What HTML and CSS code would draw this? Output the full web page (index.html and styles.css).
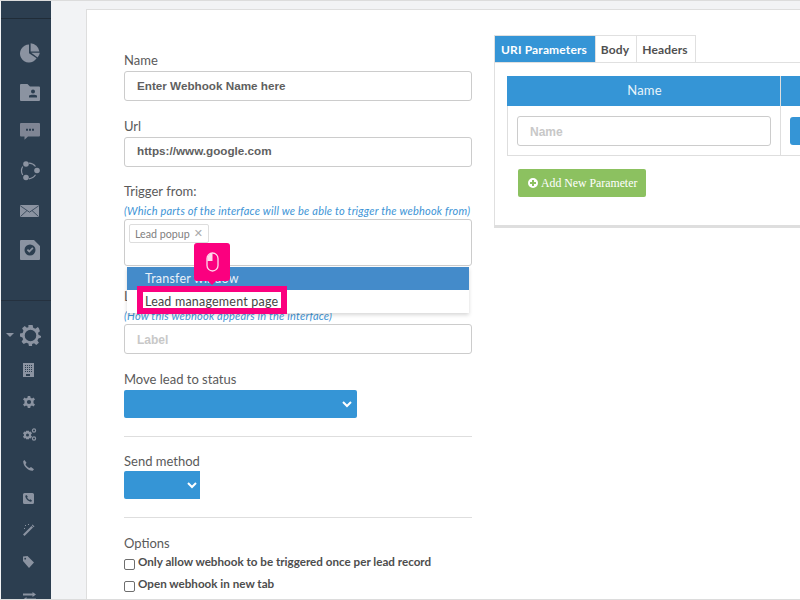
FILE: index.html
```html
<!DOCTYPE html>
<html lang="en">
<head>
<meta charset="utf-8">
<title>Webhook</title>
<link rel="stylesheet" href="styles.css">
</head>
<body>
<div class="app">
  <aside class="sidebar">
    <div class="side-top"></div>
    <nav class="side-main">
      <div class="big-row"><svg width="20" height="20" viewBox="0 0 20 20"><path d="M9 1.500A9 9 0 1 0 16.600 15.300L9 10.300Z"/><path d="M10.400 0.200A9.600 9.600 0 0 1 19.200 8.400L10.400 8.400Z" transform="translate(0.200 0)"/><path d="M11.200 9.800H19.800A9.600 9.600 0 0 1 17.600 14.600Z"/></svg></div>
      <div class="big-row"><svg width="20" height="17" viewBox="0 0 20 17"><path fill-rule="evenodd" d="M1 0H7.500L10 2.500H19A1 1 0 0 1 20 3.500V16A1 1 0 0 1 19 17H1A1 1 0 0 1 0 16V1A1 1 0 0 1 1 0ZM13 5.500A2 2 0 1 0 13 9.500A2 2 0 1 0 13 5.500ZM9 13.500H17V11.800C16 10.500 10 10.500 9 11.800Z"/></svg></div>
      <div class="big-row"><svg class="dim" width="20" height="17" viewBox="0 0 20 17"><path fill-rule="evenodd" d="M1 0H19A1 1 0 0 1 20 1V12.500A1 1 0 0 1 19 13.500H8L4.500 16.800V13.500H1A1 1 0 0 1 0 12.500V1A1 1 0 0 1 1 0ZM6 5.800H8V7.800H6ZM9 5.800H11V7.800H9ZM12 5.800H14V7.800H12Z"/></svg></div>
      <div class="big-row"><svg width="20" height="20" viewBox="0 0 20 20"><circle cx="6" cy="3" r="2.800"/><circle cx="17" cy="9.500" r="2.800"/><circle cx="6" cy="16.500" r="2.800"/><path class="line" d="M9 2.200A8.500 8.500 0 0 1 15.500 5.500M15.500 13.800A8.500 8.500 0 0 1 9 17.800M2.700 14A8.500 8.500 0 0 1 2.700 5.500"/></svg></div>
      <div class="big-row"><svg width="19" height="12" viewBox="0 0 19 12"><rect width="19" height="12" rx="0.500"/><path class="cut" d="M0.300 0.800L9.500 7.200L18.700 0.800M0.500 11.500L7 5.500M18.500 11.500L12 5.500"/></svg></div>
      <div class="big-row"><svg width="20" height="20" viewBox="0 0 20 20"><path fill-rule="evenodd" d="M1 0H14L20 6V19A1 1 0 0 1 19 20H1A1 1 0 0 1 0 19V1A1 1 0 0 1 1 0ZM10 4.500A5.500 5.500 0 1 0 10 15.500A5.500 5.500 0 1 0 10 4.500ZM6.800 10.200L8 9L9.300 10.300L12.300 7.300L13.500 8.500L9.300 12.700Z"/></svg></div>
    </nav>
    <div class="side-rule"></div>
    <nav class="side-settings">
      <div class="gear-row">
        <span class="caret"></span>
        <svg class="gear-main" width="21" height="21" viewBox="0 0 20 20"><path fill-rule="evenodd" d="M8 0H12L12.600 2.700L14.600 3.500L17 2L18 3L19 6L17.200 7.400L17.600 9.300L20 10.500V12L17.500 12.800L16.600 14.700L18 17L15.500 19L13.400 17.400L11.500 18V20H8.500L8 17.600L6 16.800L3.500 18L1.500 16L3 13.500L2.300 11.800L0 11V8L2.500 7.500L3.300 5.500L2 3L4.500 1L6.500 2.700L8 2.200ZM10 4.500A5.500 5.500 0 1 0 10 15.500A5.500 5.500 0 1 0 10 4.500Z"/></svg>
      </div>
      <div class="small-row r-building"><svg width="11" height="14" viewBox="0 0 11 14"><path fill-rule="evenodd" d="M0 0H11V14H0ZM2 2V3H3V2ZM4 2V3H5V2ZM6 2V3H7V2ZM8 2V3H9V2ZM2 4V5H3V4ZM4 4V5H5V4ZM6 4V5H7V4ZM8 4V5H9V4ZM2 6V7H3V6ZM4 6V7H5V6ZM6 6V7H7V6ZM8 6V7H9V6ZM2 8V9H3V8ZM4 8V9H5V8ZM6 8V9H7V8ZM8 8V9H9V8ZM3 11V13H7V11Z"/></svg></div>
      <div class="small-row"><svg width="12" height="12" viewBox="0 0 20 20"><path fill-rule="evenodd" d="M8 0H12L12.600 3L15 4L17.500 2.500L20 6L17.500 8L17.500 12L20 14L17.500 17.500L15 16L12.600 17L12 20H8L7.400 17L5 16L2.500 17.500L0 14L2.500 12V8L0 6L2.500 2.500L5 4L7.400 3ZM10 6.500A3.500 3.500 0 1 0 10 13.500A3.500 3.500 0 1 0 10 6.500Z"/></svg></div>
      <div class="small-row"><svg width="14" height="13" viewBox="0 0 14 13"><path fill-rule="evenodd" d="M3 2.800H6L6.300 4L7.800 3.500L9 5.500L8 6.500V7.500L9 8.500L7.800 10.500L6.300 10L6 11.200H3L2.700 10L1.200 10.500L0 8.500L1 7.500V6.500L0 5.500L1.200 3.500L2.700 4ZM4.500 5.500A1.500 1.500 0 1 0 4.500 8.500A1.500 1.500 0 1 0 4.500 5.500Z"/><circle class="line" cx="11" cy="2.500" r="1.600"/><circle class="line" cx="11" cy="10.500" r="1.600"/></svg></div>
      <div class="small-row"><svg class="up" width="11" height="11" viewBox="0 0 11 11"><path d="M1.500 0L3.500 2.800L2.500 4.200C3.200 5.800 4.800 7.500 6.500 8L8 7L11 9.300L9.800 10.800C5.500 11.500 -0.500 5.500 0.300 1Z"/></svg></div>
      <div class="small-row"><svg width="11" height="11" viewBox="0 0 11 11"><path fill-rule="evenodd" d="M1.500 0H9.500A1.500 1.500 0 0 1 11 1.500V9.500A1.500 1.500 0 0 1 9.500 11H1.500A1.500 1.500 0 0 1 0 9.500V1.500A1.500 1.500 0 0 1 1.500 0ZM3.500 2L2.300 2.800C2.200 5.500 5.500 9 8.200 8.700L9 7.500L7.200 6.300L6.400 7C5.500 6.600 4.400 5.400 4.100 4.600L4.800 3.800Z"/></svg></div>
      <div class="small-row"><svg width="12" height="12" viewBox="0 0 12 12"><path d="M0 10.500L8.500 2L10 3.500L1.500 12Z"/><path d="M9.500 0.500L11.500 2.500L10.500 3.200L8.800 1.300Z"/><rect x="2" y="1" width="1" height="1"/><rect x="5" y="0" width="1" height="1"/><rect x="1" y="4" width="1" height="1"/></svg></div>
      <div class="small-row"><svg width="11" height="12" viewBox="0 0 11 12"><path fill-rule="evenodd" d="M0 0.500L4.500 0L11 6.500L6 12L0 5ZM2.200 1.800A0.900 0.900 0 1 0 2.200 3.600A0.900 0.900 0 1 0 2.200 1.800Z"/></svg></div>
      <div class="small-row"><svg class="exchange" width="13" height="9" viewBox="0 0 13 9"><path d="M0 1.500H9.500V0L13 2.500L9.500 5V3.500H0Z"/><path d="M13 6.500H3.500V5L0 7.500L3.500 10V8.500H13Z"/></svg></div>
    </nav>
  </aside>

  <main class="workspace">
    <section class="card">
      <form class="form-col">
        <div class="field field-first">
          <label class="lbl">Name</label>
          <div class="input strong">Enter Webhook Name here</div>
        </div>
        <div class="field">
          <label class="lbl">Url</label>
          <div class="input strong url">https://www.google.com</div>
        </div>
        <div class="field field-trigger">
          <label class="lbl">Trigger from:</label>
          <div class="hint">(Which parts of the interface will we be able to trigger the webhook from)</div>
          <div class="multi">
            <span class="chip">Lead popup <span class="chip-x">&#10005;</span></span>
          </div>
          <div class="dropdown">
            <div class="opt opt-on">Transfer window</div>
            <div class="opt">Lead management page</div>
          </div>
          <div class="mouse-tip">
            <svg width="13" height="20" viewBox="0 0 13 20"><rect x="1" y="1" width="11" height="18" rx="5.500" fill="none" stroke="#fff" stroke-width="1.300" opacity="0.85"/><path d="M1.500 9V6.500A5 5 0 0 1 6.500 1.500V9Z" fill="#fff" opacity="0.85"/></svg>
          </div>
          <div class="highlight"></div>
        </div>
        <div class="field field-label">
          <label class="lbl">Label</label>
          <div class="hint">(How this webhook appears in the interface)</div>
          <div class="input placeholder">Label</div>
        </div>
        <div class="field field-status">
          <label class="lbl">Move lead to status</label>
          <div class="blue-select wide"><svg width="10" height="7" viewBox="0 0 10 7"><path d="M1 1L5 5L9 1" fill="none" stroke="#fff" stroke-width="2"/></svg></div>
        </div>
        <hr class="rule">
        <div class="field field-method">
          <label class="lbl">Send method</label>
          <div class="blue-select narrow"><svg width="10" height="7" viewBox="0 0 10 7"><path d="M1 1L5 5L9 1" fill="none" stroke="#fff" stroke-width="2"/></svg></div>
        </div>
        <hr class="rule rule-2">
        <div class="field-options">
          <label class="lbl">Options</label>
          <div class="check"><span class="box"></span><b>Only allow webhook to be triggered once per lead record</b></div>
          <div class="check"><span class="box"></span><b>Open webhook in new tab</b></div>
        </div>
      </form>

      <div class="params">
        <div class="tabs">
          <span class="tab tab-on">URI Parameters</span>
          <span class="tab">Body</span>
          <span class="tab">Headers</span>
        </div>
        <div class="panel">
          <div class="ptable">
            <div class="pcol pcol-name">
              <div class="phead">Name</div>
              <div class="pcell"><div class="input placeholder pinput">Name</div></div>
            </div>
            <div class="pcol pcol-next">
              <div class="phead"></div>
              <div class="pcell"><span class="pbtn"></span></div>
            </div>
          </div>
          <span class="add-btn"><svg width="10" height="10" viewBox="0 0 10 10"><path fill-rule="evenodd" d="M5 0A5 5 0 1 1 5 10A5 5 0 1 1 5 0ZM4 2V4H2V6H4V8H6V6H8V4H6V2Z" fill="#fff"/></svg>Add New Parameter</span>
        </div>
      </div>
    </section>
  </main>
</div>
</body>
</html>
```
FILE: styles.css
```css
* { box-sizing: border-box; }
html, body { margin: 0; padding: 0; height: 600px; overflow: hidden; }
body { font-family: Lato, "Open Sans", sans-serif; color: #4d4d4d; background: #f2f3f5; }
.app { display: flex; height: 600px; border-top: 1px solid #dcdcdc; border-bottom: 1px solid #dcdcdc; padding-left: 1px; overflow: hidden; }

.sidebar { width: 50px; flex: none; background: #2c3e50; display: flex; flex-direction: column; overflow: hidden; }
.sidebar svg { fill: #8b93a1; display: block; }
.sidebar svg.dim { fill: #7f8594; }
.sidebar svg.up { margin-top: -2px; }
.sidebar .line { fill: none; stroke: #8b93a1; stroke-width: 1.200; }
.sidebar .cut { fill: none; stroke: #2c3e50; stroke-width: 0.800; }
.side-top { height: 18px; border-bottom: 1px solid #202c38; flex: none; }
.side-main { padding: 14px 0 0 19px; height: 281px; flex: none; }
.big-row { height: 39.500px; display: flex; align-items: center; }
.side-rule { height: 1px; background: #25313f; flex: none; }
.side-settings { padding: 16px 0 0 0; }
.gear-row { height: 36px; display: flex; align-items: center; padding-left: 5px; }
.caret { width: 0; height: 0; border: 4px solid transparent; border-top: 4px solid #8b93a1; border-bottom: 0; margin-right: 6px; }
.gear-main { width: 21px; height: 21px; }
.small-row { height: 32px; display: flex; align-items: center; padding-left: 22px; }
.r-building { height: 33px; }
.sidebar svg.exchange { overflow: visible; margin-top: 4px; }

.workspace { flex: 1; min-width: 0; padding: 8px 0 0 35px; }
.card { height: 600px; background: #fff; border: 1px solid #dedede; border-right: 0; padding: 0 0 0 37px; display: flex; gap: 22px; }

.form-col { width: 348px; flex: none; padding-top: 42px; }
.field { position: relative; margin-bottom: 16px; }
.field-first { margin-bottom: 17px; }
.lbl { display: block; font-size: 13px; line-height: 17px; height: 19px; color: #5a5a5a; }
.input { height: 30px; border: 1px solid #ccc; border-radius: 3px; padding: 0 12px; font-family: "Liberation Sans", Arial, sans-serif; font-size: 11.700px; line-height: 28px; }
.strong { font-weight: 700; color: #5f5f5f; }
.url { line-height: 26px; }
.placeholder { font-weight: 700; color: #c8c8c8; font-size: 12px; line-height: 30px; }

.field-trigger { margin-bottom: 0; height: 105px; }
.field-trigger .lbl { height: 21px; }
.hint { font-size: 11px; font-style: italic; line-height: 13px; color: #3d94d6; white-space: nowrap; letter-spacing: 0.200px; }
.multi { display: flex; align-items: flex-start; margin-top: 2px; height: 47px; border: 1px solid #ccc; border-radius: 3px; padding: 4px; }
.chip { display: inline-flex; align-items: center; height: 19px; padding: 0 5px; border: 1px solid #ddd; border-radius: 2px; font-size: 10.700px; color: #808080; }
.chip-x { font-size: 11px; margin-left: 4px; color: #aaa; font-family: "DejaVu Sans", sans-serif; }
.dropdown { position: absolute; left: 3px; top: 84px; width: 342px; background: #fff; box-shadow: 0 2px 4px rgba(0, 0, 0, 0.16); z-index: 1; }
.opt { height: 23px; padding-left: 18px; font-size: 12.500px; line-height: 23px; color: #444; letter-spacing: 0.200px; }
.opt-on { background: #448bca; color: #e8f0f8; }
.mouse-tip { position: absolute; left: 70px; top: 60px; width: 36px; height: 38px; background: #fb007f; border-radius: 3px; display: flex; align-items: center; justify-content: center; z-index: 3; }
.mouse-tip::after { content: ""; position: absolute; left: 14px; bottom: -4px; border: 4px solid transparent; border-top-color: #fb007f; border-bottom: 0; }
.highlight { position: absolute; left: 13px; top: 103px; width: 150px; height: 28px; border: 6px solid #fb007f; z-index: 2; }

.field-label .lbl { height: 22px; }
.field-label .hint { height: 11px; line-height: 11px; }
.field-label .input { margin-top: 3px; }
.field-status { margin-bottom: 0; }
.field-status .lbl { height: 20px; line-height: 18px; }
.blue-select { height: 28px; background: #3595d6; border-radius: 2px; display: flex; align-items: center; justify-content: flex-end; padding-right: 5px; }
.wide { width: 233px; }
.narrow { width: 76px; border-radius: 2px 0 0 2px; padding-right: 3px; }
.rule { border: 0; border-top: 1px solid #dedede; margin: 18px 0 15px; }
.rule-2 { margin-bottom: 16px; }
.field-method { margin-bottom: 0; }
.field-method .lbl { line-height: 18px; }
.field-options .lbl { height: 17px; line-height: 18px; }
.check { display: flex; align-items: center; height: 22px; font-size: 11.650px; color: #4d4d4d; white-space: nowrap; }
.check b { margin-bottom: 2px; }
.box { width: 11px; height: 11px; border: 1px solid #6e6e6e; border-radius: 2px; background: #fff; margin-right: 3px; margin-top: 4px; flex: none; }

.params { flex: 1; min-width: 0; padding-top: 25px; }
.tabs { display: flex; height: 27px; border: 1px solid #e0e0e0; border-bottom: 0; width: 202px; }
.tab { display: flex; align-items: center; justify-content: center; padding: 0 7px 0 5px; font-size: 12px; font-weight: 700; color: #505050; border-left: 1px solid #e0e0e0; letter-spacing: 0.150px; white-space: nowrap; }
.tab:nth-child(2) { width: 41px; }
.tab:nth-child(3) { flex: 1; }
.tab-on { width: 100px; background: #3595d6; color: #fff; border-left: 0; }
.panel { height: 166px; border: 1px solid #e0e0e0; border-bottom: 3px solid #dedede; border-right: 0; padding: 13px 0 0 12px; }
.ptable { display: flex; width: 360px; height: 80px; border-bottom: 1px solid #dedede; }
.pcol { min-width: 0; border-right: 1px solid #dedede; }
.pcol-name { flex: none; width: 274px; border-left: 1px solid #dedede; }
.pcol-next { flex: 1; }
.phead { height: 30px; background: #3595d6; color: #e8f4fb; font-size: 13px; line-height: 29px; text-align: center; letter-spacing: 0.200px; padding-left: 2px; }
.pcol-name .phead { margin-left: -1px; }
.pcell { height: 49px; padding: 10px 9px; }
.pinput { height: 30px; }
.pbtn { display: block; height: 28px; background: #3595d6; border-radius: 3px 0 0 3px; margin-top: 1px; }
.add-btn { display: inline-flex; align-items: center; gap: 3px; height: 28px; width: 128px; margin: 13px 0 0 11px; padding-left: 10px; background: #8cc160; border-radius: 2px; color: #fff; font-family: "Liberation Serif", serif; font-size: 11.800px; white-space: nowrap; }
```
